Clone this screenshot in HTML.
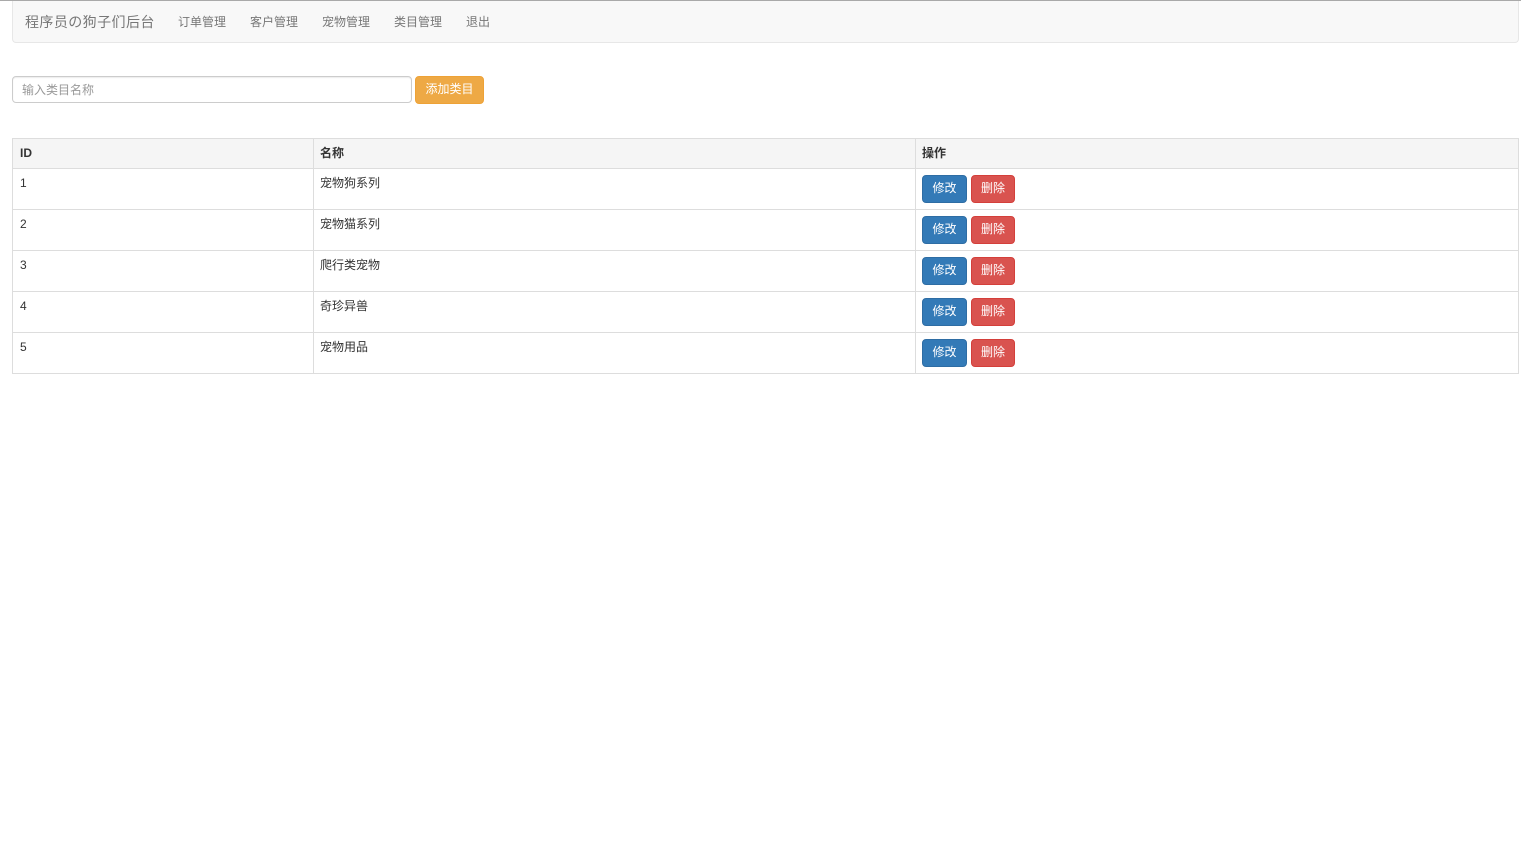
<!DOCTYPE html>
<html lang="zh">
<head>
<meta charset="utf-8">
<title>后台</title>
<style>
*{box-sizing:border-box}
html,body{margin:0;padding:0;background:#fff;width:1521px;height:857px;overflow:hidden}
body{font-family:"Liberation Sans","WenQuanYi Zen Hei","Noto Sans CJK SC",sans-serif;font-size:12px;color:#333;position:relative}
.top{position:absolute;left:0;top:0;width:1521px;height:1px;background:#a9a9a9}
.nav{position:absolute;left:12px;top:1px;width:1507px;height:42px;background:#f8f8f8;border:1px solid #e7e7e7;border-top:0;border-radius:0 0 4px 4px}
.nav span{position:absolute;top:13px;line-height:17px;color:#777;white-space:nowrap;font-size:12px}
.nav .brand{font-size:14px;left:12px;top:11px;line-height:20px;letter-spacing:.42px}
input{position:absolute;left:12px;top:76px;width:400px;height:27px;border:1px solid #ccc;border-radius:4px;padding:0 9px;font:12px "Liberation Sans","WenQuanYi Zen Hei","Noto Sans CJK SC",sans-serif;box-shadow:inset 0 1px 1px rgba(0,0,0,.075);outline:0}
input::placeholder{color:#999;opacity:1}
.btn{position:absolute;display:block;height:28px;border:1px solid;border-radius:4px;color:#fff;font-size:12px;line-height:24px;text-align:center}
.add{left:415px;top:76px;width:69px;background:#eea945;border-color:#eea236}
table{position:absolute;left:12px;top:138px;width:1506px;border-collapse:collapse;table-layout:fixed}
th,td{border:1px solid #ddd;padding:0 6px;text-align:left;vertical-align:top;font-size:12px;color:#333}
th:first-child,td:first-child{padding-left:7px}
th{height:30px;background:#f5f5f5;font-weight:bold;line-height:28px}
td{height:41px;line-height:17px;padding-top:6px;position:relative}
.e{left:6px;top:6px;width:45px;background:#337ab7;border-color:#2e6da4}
.d{left:55px;top:6px;width:44px;background:#d9534f;border-color:#d43f3a}
</style>
</head>
<body>
<div class="top"></div>
<div class="nav">
<span class="brand">程序员の狗子们后台</span>
<span style="left:165px">订单管理</span>
<span style="left:237px">客户管理</span>
<span style="left:309px">宠物管理</span>
<span style="left:381px">类目管理</span>
<span style="left:453px">退出</span>
</div>
<input type="text" placeholder="输入类目名称">
<a class="btn add">添加类目</a>
<table>
<colgroup><col style="width:301px"><col style="width:602px"><col style="width:603px"></colgroup>
<tr><th>ID</th><th>名称</th><th>操作</th></tr>
<tr><td>1</td><td>宠物狗系列</td><td><a class="btn e">修改</a><a class="btn d">删除</a></td></tr>
<tr><td>2</td><td>宠物猫系列</td><td><a class="btn e">修改</a><a class="btn d">删除</a></td></tr>
<tr><td>3</td><td>爬行类宠物</td><td><a class="btn e">修改</a><a class="btn d">删除</a></td></tr>
<tr><td>4</td><td>奇珍异兽</td><td><a class="btn e">修改</a><a class="btn d">删除</a></td></tr>
<tr><td>5</td><td>宠物用品</td><td><a class="btn e">修改</a><a class="btn d">删除</a></td></tr>
</table>
</body>
</html>
